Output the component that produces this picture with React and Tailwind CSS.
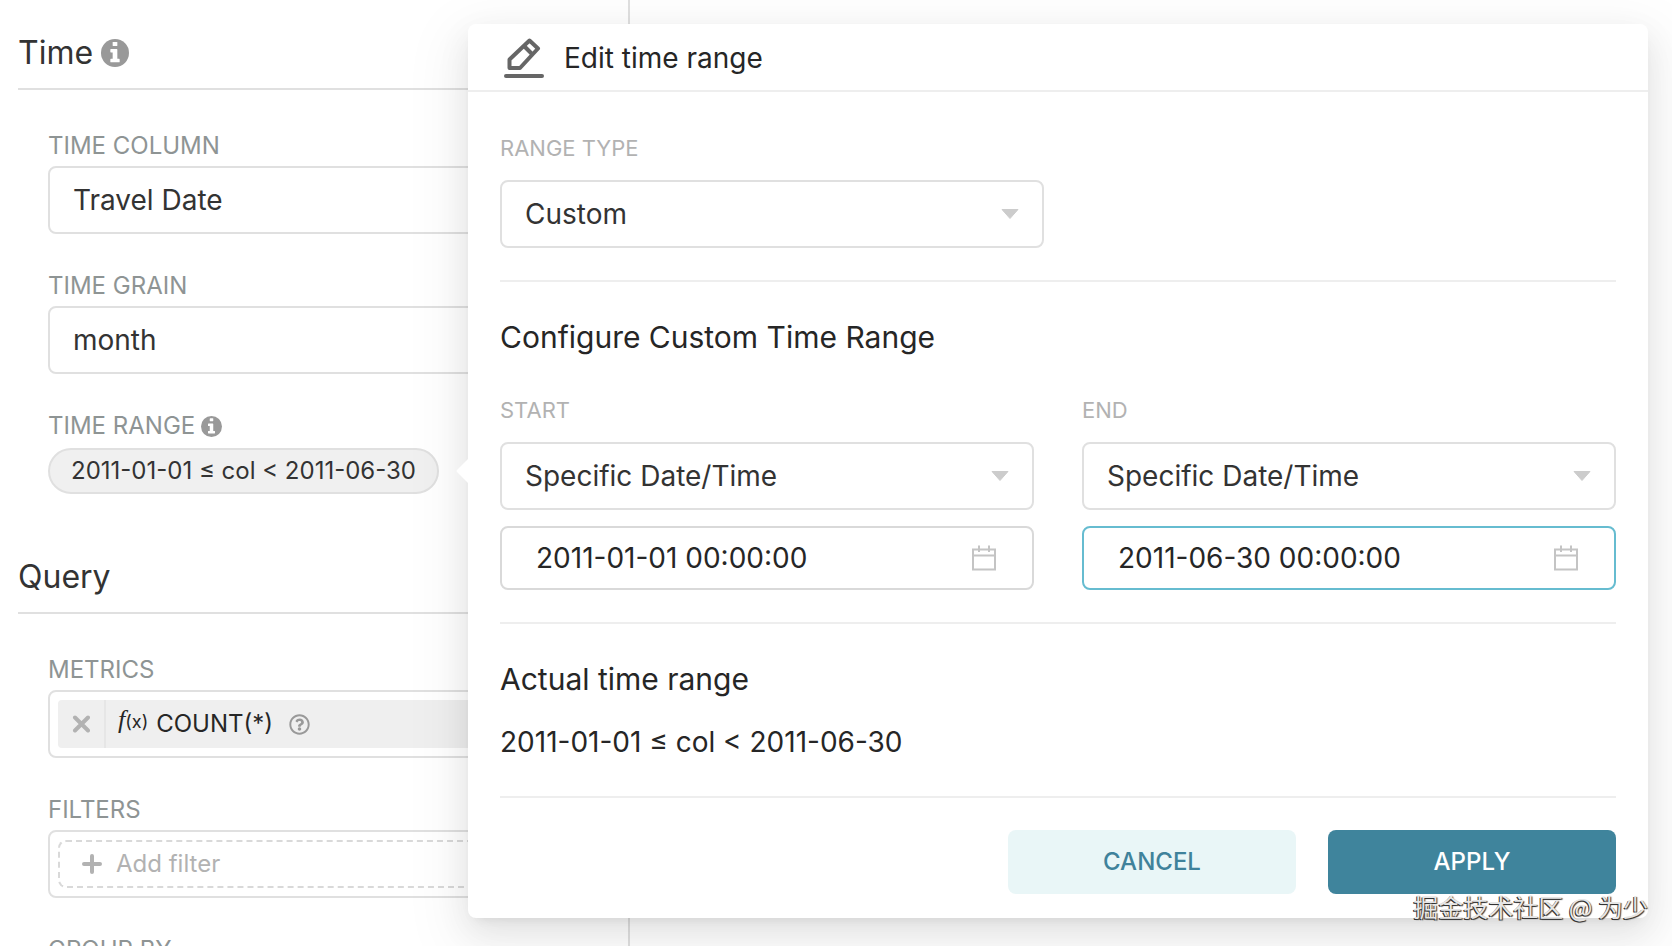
import React, { useState } from "react";
import { FaRegQuestionCircle } from "react-icons/fa";

const rangeTypes = ["Custom", "Last", "Previous", "Advanced", "No filter"];
const dateModes = ["Specific Date/Time", "Relative Date/Time", "Now", "Midnight"];

const EditIcon = () => (
  <svg width="40" height="40" viewBox="0 0 40 40" fill="none" stroke="#666666" aria-hidden="true">
    <path d="M5.5 30V21.5L25.5 2.5L34 10.5L16 30Z" strokeWidth="4" strokeLinejoin="round" />
    <path d="M20 8L28 16" strokeWidth="4" />
    <path d="M2 38H38" strokeWidth="4" strokeLinecap="round" />
  </svg>
);

const InfoIcon = ({ className }) => (
  <svg className={className} viewBox="0 0 24 24" aria-hidden="true">
    <circle cx="12" cy="12" r="12" fill="#999999" />
    <rect x="10" y="2.5" width="4" height="3.5" rx="0.5" fill="#ffffff" />
    <path
      d="M8.5 8.5H13.5Q14 8.5 14 9V17H15.5Q16 17 16 17.5V19.5Q16 20 15.5 20H8.5Q8 20 8 19.5V17.5Q8 17 8.5 17H10V11.5H8.5Q8 11.5 8 11V9Q8 8.5 8.5 8.5Z"
      fill="#ffffff"
    />
  </svg>
);

const CalendarIcon = () => (
  <svg width="26" height="28" viewBox="0 0 26 28" fill="none" stroke="#c4c4c4" strokeWidth="2" aria-hidden="true">
    <path d="M2 5.5H24V25.5H2Z" />
    <path d="M2 11.5H24M8 1.5V8M18 1.5V8" />
  </svg>
);

const CloseIcon = () => (
  <svg width="18" height="18" viewBox="0 0 18 18" fill="none" aria-hidden="true">
    <path d="M3 2.5L16 15.5M16 2.5L3 15.5" stroke="#b2b2b2" strokeWidth="4" strokeLinecap="round" />
  </svg>
);

const PlusIcon = () => (
  <svg width="20" height="20" viewBox="0 0 20 20" fill="none" aria-hidden="true">
    <path d="M10 2V18M2 10H18" stroke="#b2b2b2" strokeWidth="4" strokeLinecap="round" />
  </svg>
);

const SectionHeader = ({ title, info }) => (
  <div className="flex items-center gap-2 border-b-2 border-[#e0e0e0] pb-[15px]">
    <h2 className="text-[32px] leading-10 text-[#333333]">{title}</h2>
    {info && <InfoIcon className="size-7" />}
  </div>
);

const ControlLabel = ({ id, text, info }) => (
  <div className="mb-1 flex items-center gap-1.5">
    <label htmlFor={id} className="text-2xl leading-8 text-[#8e9494]">
      {text}
    </label>
    {info && <InfoIcon className="size-[21px]" />}
  </div>
);

const Select = ({ id, value, options, onChange }) => (
  <div className="relative">
    <select
      id={id}
      value={value}
      onChange={(e) => onChange(e.target.value)}
      className="h-17 w-full appearance-none rounded-lg border-2 border-[#e0e0e0] bg-white px-[23px] text-[28px] text-[#333333] outline-none"
    >
      {options.map((option) => (
        <option key={option}>{option}</option>
      ))}
    </select>
    <svg
      className="pointer-events-none absolute top-1/2 right-[25px] -translate-y-1/2"
      width="18"
      height="10"
      viewBox="0 0 18 10"
      aria-hidden="true"
    >
      <path d="M1 0.5H17L9 9.5Z" fill="#cccccc" stroke="#cccccc" strokeLinejoin="round" />
    </svg>
  </div>
);

const DateInput = ({ label, value, onChange, active }) => (
  <div
    className={`flex h-16 items-center rounded-lg border-2 pr-[35px] pl-[34px] ${
      active ? "border-[#66bcd0]" : "border-[#d9d9d9]"
    }`}
  >
    <input
      type="text"
      aria-label={label}
      value={value}
      onChange={(e) => onChange(e.target.value)}
      className="min-w-0 flex-1 bg-transparent text-[28px] text-[#262626] outline-none"
    />
    <CalendarIcon />
  </div>
);

const RangeEnd = ({ id, label, mode, setMode, date, setDate, active }) => (
  <div className="flex min-w-0 flex-1 flex-col gap-4">
    <label htmlFor={id} className="text-[22px] leading-8 text-[#b2b2b2]">
      {label}
    </label>
    <Select id={id} value={mode} options={dateModes} onChange={setMode} />
    <DateInput label={`${label} date`} value={date} onChange={setDate} active={active} />
  </div>
);

const TimeRangePopover = ({ range }) => {
  const [rangeType, setRangeType] = useState("Custom");
  const [startMode, setStartMode] = useState(dateModes[0]);
  const [endMode, setEndMode] = useState(dateModes[0]);
  const [start, setStart] = useState("2011-01-01 00:00:00");
  const [end, setEnd] = useState("2011-06-30 00:00:00");

  return (
    <div
      role="dialog"
      aria-label="Edit time range"
      className="absolute top-6 right-6 left-[468px] rounded-lg bg-white shadow-[0_6px_12px_-8px_rgba(0,0,0,0.12),0_12px_32px_rgba(0,0,0,0.08),0_18px_56px_16px_rgba(0,0,0,0.05)]"
    >
      {/* Arrow pointing at the range pill */}
      <svg className="absolute top-[435px] -left-3" width="12" height="24" viewBox="0 0 12 24" aria-hidden="true">
        <path d="M12 0L1 11Q0 12 1 13L12 24Z" fill="#ffffff" />
      </svg>

      <div className="flex h-17 items-center gap-5 border-b-2 border-[#eeeeee] px-9 pt-0.5">
        <EditIcon />
        <h3 className="text-[28px] text-[#262626]">Edit time range</h3>
      </div>

      <div className="px-8 pt-10 pb-6">
        <div className="flex flex-col gap-4">
          <label htmlFor="range-type" className="text-[22px] leading-8 text-[#b2b2b2]">
            RANGE TYPE
          </label>
          <div className="w-[544px] max-w-full">
            <Select id="range-type" value={rangeType} options={rangeTypes} onChange={setRangeType} />
          </div>
        </div>

        <div className="mt-8 border-t-2 border-[#eeeeee] pt-[35px]">
          <h4 className="text-[30px] leading-10 text-[#262626]">Configure Custom Time Range</h4>
          <div className="mt-[37px] flex gap-12">
            <RangeEnd
              id="start-mode"
              label="START"
              mode={startMode}
              setMode={setStartMode}
              date={start}
              setDate={setStart}
            />
            <RangeEnd
              id="end-mode"
              label="END"
              mode={endMode}
              setMode={setEndMode}
              date={end}
              setDate={setEnd}
              active
            />
          </div>
        </div>

        <div className="mt-8 border-t-2 border-[#eeeeee] pt-[35px]">
          <h4 className="text-[30px] leading-10 text-[#262626]">Actual time range</h4>
          <p className="mt-[23px] text-[28px] leading-10 text-[#262626]">{range}</p>
        </div>

        <div className="mt-[34px] flex justify-end gap-8 border-t-2 border-[#eeeeee] pt-8">
          <button className="h-16 w-72 rounded-lg bg-[#e9f6f7] text-2xl font-medium text-[#3f829b]">CANCEL</button>
          <button className="h-16 w-72 rounded-lg bg-[#3f849c] text-2xl font-medium text-white">APPLY</button>
        </div>
      </div>
    </div>
  );
};

const App = () => {
  const [column, setColumn] = useState("Travel Date");
  const [grain, setGrain] = useState("month");
  const range = "2011-01-01 ≤ col < 2011-06-30";

  return (
    <div className="relative h-screen overflow-hidden bg-white font-['Inter',sans-serif]">
      <aside className="h-full w-[630px] overflow-hidden border-r-2 border-[#e0e0e0] pr-4 pl-[18px]">
        <section className="pt-[33px]">
          <SectionHeader title="Time" info />
          <div className="flex flex-col gap-9 pt-10 pl-[30px]">
            <div>
              <ControlLabel id="time-column" text="TIME COLUMN" />
              <Select id="time-column" value={column} options={["Travel Date"]} onChange={setColumn} />
            </div>
            <div>
              <ControlLabel id="time-grain" text="TIME GRAIN" />
              <Select id="time-grain" value={grain} options={["month", "day", "year"]} onChange={setGrain} />
            </div>
            <div>
              <ControlLabel id="time-range" text="TIME RANGE" info />
              <button
                id="time-range"
                className="mt-0.5 h-[46px] rounded-full border-2 border-[#e0e0e0] bg-[#f0f0f0] px-[21px] text-2xl text-[#333333]"
              >
                {range}
              </button>
            </div>
          </div>
        </section>

        <section className="pt-[63px]">
          <SectionHeader title="Query" />
          <div className="flex flex-col gap-9 pt-10 pl-[30px]">
            <div>
              <ControlLabel id="metrics" text="METRICS" />
              <div className="rounded-lg border-2 border-[#e0e0e0] p-2">
                <div className="flex h-12 items-center rounded bg-[#efefef]">
                  <button
                    aria-label="Remove metric"
                    className="flex h-full w-12 items-center justify-center border-r-2 border-[#e6e6e6]"
                  >
                    <CloseIcon />
                  </button>
                  <button id="metrics" className="flex items-center pl-3 text-[#262626]">
                    <span className="pb-1.5 text-lg leading-7">
                      <i className="font-['Liberation_Serif',serif] text-[26px]">f</i>(x)
                    </span>
                    <span className="pl-2 text-2xl">COUNT(*)</span>
                  </button>
                  <FaRegQuestionCircle className="ml-4 size-[21px] text-[#999999]" />
                </div>
              </div>
            </div>
            <div>
              <ControlLabel id="filters" text="FILTERS" />
              <div className="rounded-lg border-2 border-[#e0e0e0] p-2">
                <button
                  id="filters"
                  className="flex h-12 w-full items-center gap-3.5 rounded-lg border-2 border-dashed border-[#d9d9d9] px-[22px] text-2xl text-[#b2b2b2]"
                >
                  <PlusIcon />
                  Add filter
                </button>
              </div>
            </div>
            <div>
              <ControlLabel id="group-by" text="GROUP BY" />
              <button id="group-by" className="h-17 w-full rounded-lg border-2 border-[#e0e0e0]" />
            </div>
          </div>
        </section>
      </aside>

      <TimeRangePopover range={range} />

      <p className="pointer-events-none absolute right-6 bottom-6 text-[25px] leading-8 text-[#e6e6e6] font-['Noto_Sans_CJK_SC',sans-serif] [text-shadow:-1px_1px_0_#333333,1px_1px_1px_#333333]">
        掘金技术社区 @ 为少
      </p>
    </div>
  );
};

export default App;
